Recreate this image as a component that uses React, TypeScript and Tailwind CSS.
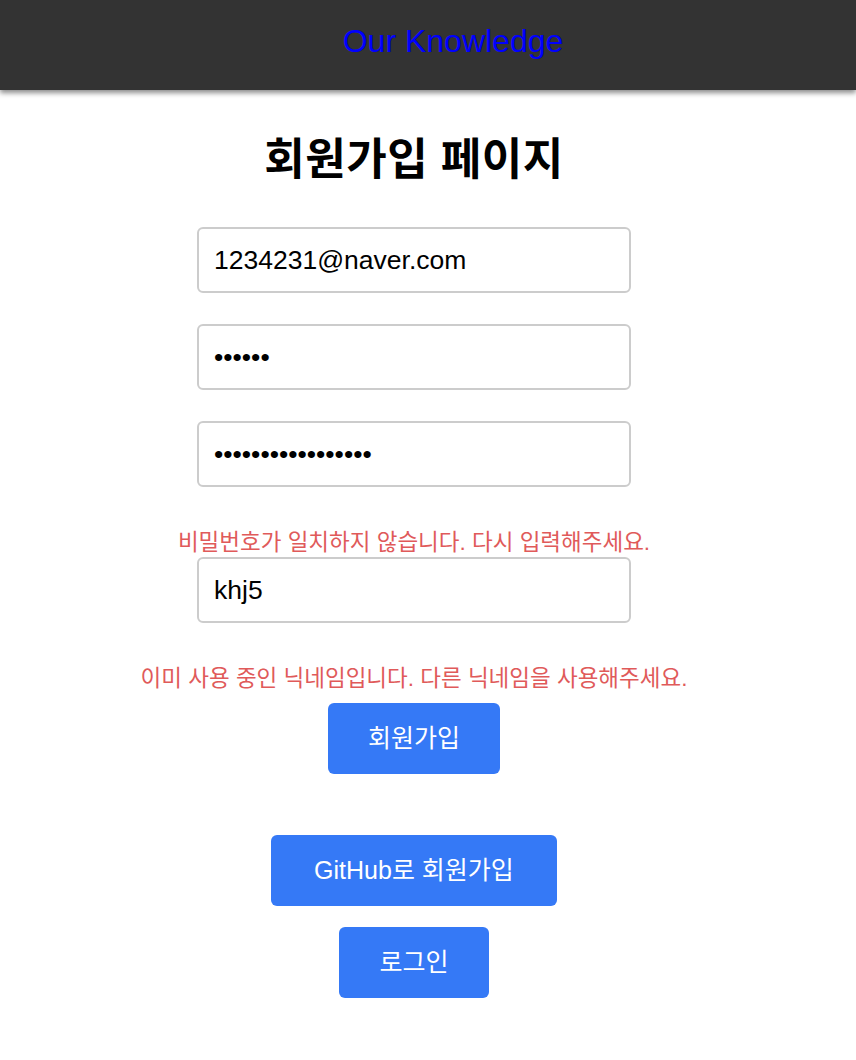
import { useState } from 'react';

const font = { fontFamily: '"Liberation Sans", "Noto Sans CJK KR", sans-serif' };

function Header() {
  return (
    <div className="h-[90px] bg-[#333333] flex items-center justify-center shadow-[0_3px_5px_rgba(0,0,0,0.45)] relative z-10">
      <a className="text-[32px] text-[#0000ff] pl-[50px] leading-none pb-[8px]">Our Knowledge</a>
    </div>
  );
}

function Field({ type, value, onChange }: { type: string; value: string; onChange: (v: string) => void }) {
  return (
    <input
      type={type}
      value={value}
      onChange={(e) => onChange(e.target.value)}
      className="w-[434px] h-[66px] border-2 border-[#cccccc] rounded-[6px] px-[15px] text-[26.5px] text-black outline-none"
      style={font}
    />
  );
}

export default function App() {
  const [email, setEmail] = useState('1234231@naver.com');
  const [pw, setPw] = useState('123456');
  const [pw2, setPw2] = useState('12345678901234567');
  const [nick, setNick] = useState('khj5');

  return (
    <div className="min-h-[1060px] bg-white" style={font}>
      <Header />
      <div className="w-[828px] flex flex-col items-center">
        <h1 className="mt-[42px] text-[44px] font-bold leading-[56px] tracking-[0.5px] text-black">회원가입 페이지</h1>
        <div className="mt-[39px] flex flex-col items-center gap-[31px]">
          <Field type="text" value={email} onChange={setEmail} />
          <Field type="password" value={pw} onChange={setPw} />
          <Field type="password" value={pw2} onChange={setPw2} />
        </div>
        <p className="mt-[41px] text-[22.5px] leading-[29px] text-[#e05a5a]">비밀번호가 일치하지 않습니다. 다시 입력해주세요.</p>
        <Field type="text" value={nick} onChange={setNick} />
        <p className="mt-[41px] text-[22.5px] leading-[29px] text-[#e05a5a]">이미 사용 중인 닉네임입니다. 다른 닉네임을 사용해주세요.</p>
        <button className="mt-[10px] w-[172px] h-[71px] rounded-[6px] bg-[#3579f6] text-white text-[25px]">회원가입</button>
        <button className="mt-[61px] w-[286px] h-[71px] rounded-[6px] bg-[#3579f6] text-white text-[25px]">GitHub로 회원가입</button>
        <button className="mt-[21px] w-[150px] h-[71px] rounded-[6px] bg-[#3579f6] text-white text-[25px]">로그인</button>
      </div>
    </div>
  );
}
